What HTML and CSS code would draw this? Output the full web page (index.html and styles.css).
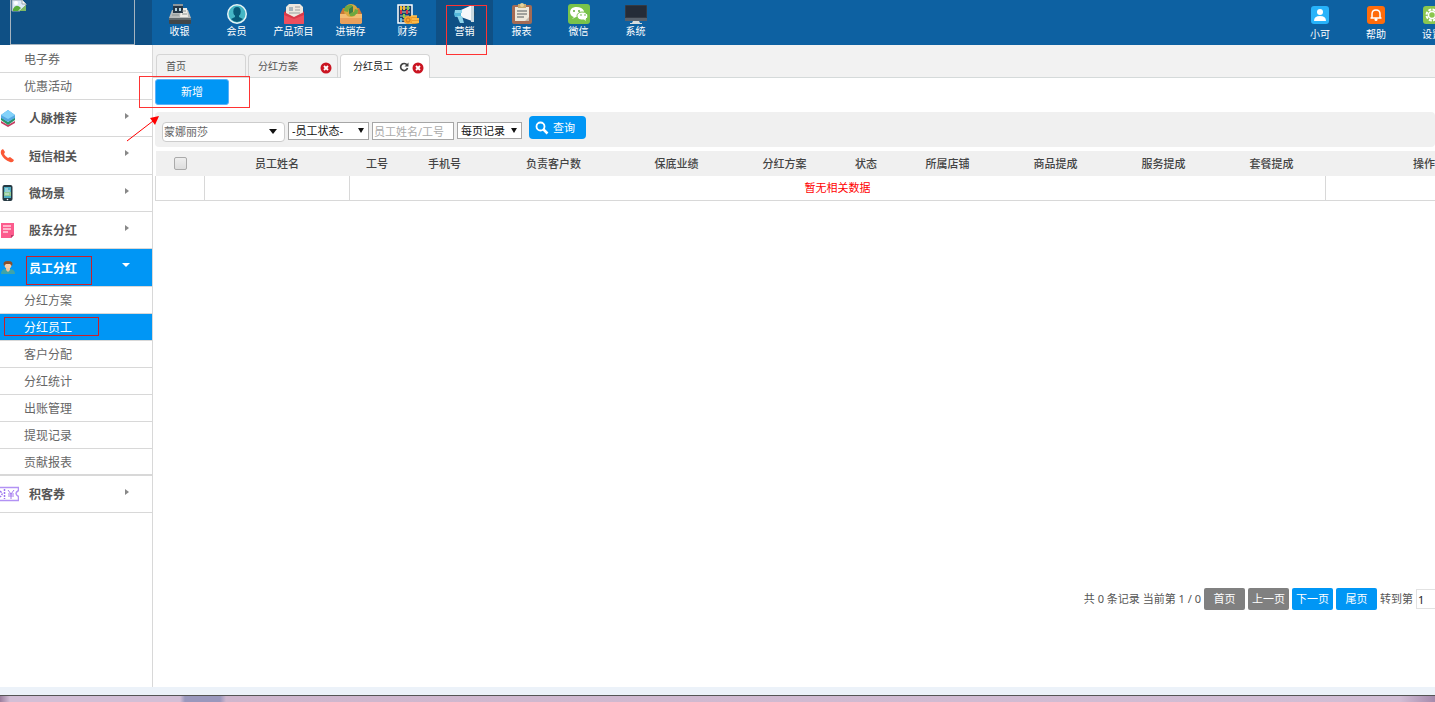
FILE: index.html
```html
<!DOCTYPE html>
<html lang="zh-CN">
<head>
<meta charset="utf-8">
<title>分红员工</title>
<link rel="stylesheet" href="styles.css">
</head>
<body>
<header class="topbar">
  <div class="brand">
    <div class="logo">
      <svg class="logo-icon" width="16" height="12" viewBox="0 0 16 12"><path d="M1 0H11L15 4V5L9 11H1Z" fill="#dce9f8" stroke="#9aa5ad"/><path d="M11 0V4H15" fill="#fff" stroke="#9aa5ad"/><path d="M2 9Q5 3 10 8L7 11H2Z" fill="#58ad3a"/><path d="M8 11L15 5V11Z" fill="#7fb965"/><circle cx="5" cy="3" r="2" fill="#fff"/></svg>
    </div>
  </div>
  <nav class="modules">
    <a class="module" href="#"><svg width="24" height="22" viewBox="0 0 24 22"><path d="M4 7h16l3 8H1z" fill="#b9bcbb"/><path d="M13 5h6l1 9h-8z" fill="#f1eee7"/><path d="M5 1h10v3H5z" fill="#8d979c"/><path d="M5 3h10v7H5z" fill="#263746"/><path d="M7 5h2v3H7zm4 0h2v3h-2z" fill="#b9d7e0"/><path d="M4 12h7M14 8h4M14 11h5" stroke="#8b9291" stroke-width="1"/><path d="M1 15h22v5q0 1-1 1H2q-1 0-1-1z" fill="#424749"/><path d="M1 15h22v2H1z" fill="#62696b"/></svg>收银</a>
    <a class="module" href="#"><svg width="24" height="22" viewBox="0 0 24 22"><circle cx="12" cy="11" r="10" fill="#e7f5f6"/><circle cx="12" cy="11" r="8.500" fill="#45b6c5"/><ellipse cx="12" cy="8.500" rx="3.700" ry="4.500" fill="#075978"/><path d="M10 12h4v2l4 2q-6 6-12 0l4-2z" fill="#075978"/></svg>会员</a>
    <a class="module" href="#"><svg width="24" height="22" viewBox="0 0 24 22"><path d="M2 10L6 4h14l2 6v9H2z" fill="#b92e40"/><path d="M7 1h11l3 3v12H4V4z" fill="#ece8df"/><path d="M7 4h4v4H7z" fill="#a7b5bb"/><path d="M13 4h5M13 7h5M7 10h11" stroke="#9c9f9f"/><path d="M2 9l10 5 10-5v11q0 1-1 1H3q-1 0-1-1z" fill="#d93a4a"/><path d="M2 12l10 4 10-4v8q0 1-1 1H3q-1 0-1-1z" fill="#ed4f5e"/></svg>产品项目</a>
    <a class="module" href="#"><svg width="24" height="22" viewBox="0 0 24 22"><path d="M1 11L4 5h16l3 6v9H1z" fill="#c97835"/><circle cx="12" cy="8" r="7" fill="#d9a73f"/><path d="M5 8q0-7 8-6l1 3-4 1-1 3zM19 7q0 7-8 6l-1-3 5-1 1-3z" fill="#6fa83f"/><path d="M10 6l4-3v6l-4 2z" fill="#3f7d46"/><path d="M1 11h6q1 3 5 3t5-3h6v9l-2 1H3l-2-1z" fill="#f3bd73"/><path d="M1 15h22v5l-2 1H3l-2-1z" fill="#eaa05c"/></svg>进销存</a>
    <a class="module" href="#"><svg width="24" height="22" viewBox="0 0 24 22"><path d="M2 2h14v18H2z" fill="#17416e" stroke="#fff" stroke-width="1.500"/><path d="M4 5h10M4 9h10M4 13h9M4 17h5" stroke="#cfc7aa"/><path d="M5 3v4M8 3v4" stroke="#f4b936" stroke-width="2"/><path d="M11 7v4M5 7v4" stroke="#d83245" stroke-width="2"/><path d="M12 3v4M8 11v4" stroke="#8bcb43" stroke-width="2"/><path d="M5 15v4" stroke="#5fb8de" stroke-width="2"/><path d="M14 13h7v2h2v5q-5 2-10 0z" fill="#e99a2c"/><path d="M15 13h6M16 16h7M16 19h7" stroke="#ffc450" stroke-width="1.500"/><circle cx="12" cy="17" r="4" fill="#f5a52e"/><circle cx="12" cy="17" r="2" fill="none" stroke="#cc7520"/></svg>财务</a>
    <a class="module selected" href="#"><svg width="24" height="22" viewBox="0 0 24 22"><path d="M20 7q5 4 0 7z" fill="#224a65"/><path d="M2 7h7v7H2l-1-3z" fill="#56b9db"/><path d="M8 7l11-5v16L8 14z" fill="#f5f8fa"/><path d="M4 13h5l2 7H7z" fill="#8bd3e9"/><path d="M18 2h3v17h-3z" fill="#c9d8df"/><path d="M2 7h7v3H2z" fill="#8bd3e9"/></svg>营销<i class="mark mark-module"></i></a>
    <a class="module" href="#"><svg width="24" height="22" viewBox="0 0 24 22"><rect x="2" y="2" width="20" height="19" rx="2" fill="#a46b54"/><path d="M5 4h14v14H5z" fill="#eee9db"/><path d="M8 1h8v4H8z" fill="#c7ab70"/><circle cx="12" cy="2" r="2" fill="#e6d29a"/><path d="M7 8h10M7 11h10M7 14h7" stroke="#888a88" stroke-width="1.500"/><path d="M15 18l4-4v4z" fill="#c4bbae"/></svg>报表</a>
    <a class="module" href="#"><svg width="24" height="22" viewBox="0 0 24 22"><rect x="1" y="1" width="22" height="20" rx="3" fill="#79c34b"/><path d="M9.500 4C1 4 2 13 7 14L5 16l4-2q9 0 8-6Q15 4 9.500 4" fill="#fff"/><path d="M15 9c-6 0-7 7-1 8h3l3 2-1-3q4-3 0-6-1-1-4-1" fill="#fff" stroke="#79c34b"/><circle cx="7" cy="8" r="1" fill="#64ad3e"/><circle cx="12" cy="8" r="1" fill="#64ad3e"/><circle cx="14" cy="12" r=".8" fill="#64ad3e"/><circle cx="18" cy="12" r=".8" fill="#64ad3e"/></svg>微信</a>
    <a class="module" href="#"><svg width="24" height="22" viewBox="0 0 24 22"><rect x="1" y="2" width="22" height="16" rx="1" fill="#343a44"/><path d="M2 3h20v11H2z" fill="#252c38"/><path d="M1 15h22v3H1z" fill="#59616b"/><path d="M9 18h6l1 2h2v1H6v-1h2z" fill="#d9dddd"/></svg>系统</a>
  </nav>
  <nav class="account">
    <a class="tool" href="#"><svg width="18" height="18" viewBox="0 0 18 18"><rect width="18" height="18" rx="3" fill="#27b3fa"/><circle cx="9" cy="6" r="3" fill="#fff"/><path d="M3 15q0-5 6-5t6 5z" fill="#fff"/></svg>小可</a>
    <a class="tool" href="#"><svg width="18" height="18" viewBox="0 0 18 18"><rect width="18" height="18" rx="3" fill="#ff6c0a"/><path d="M3.500 12h11M5 12V8q0-4 4-4t4 4v4" fill="none" stroke="#fff" stroke-width="1.500"/><circle cx="9" cy="13.500" r="1.500" fill="#fff"/></svg>帮助</a>
    <a class="tool" href="#"><svg width="18" height="18" viewBox="0 0 18 18"><rect width="18" height="18" rx="3" fill="#8bc64f"/><circle cx="9" cy="9" r="5.500" fill="none" stroke="#fff" stroke-width="2" stroke-dasharray="3 1.300"/><circle cx="9" cy="9" r="3.500" fill="none" stroke="#fff" stroke-width="1.500"/></svg>设置</a>
  </nav>
</header>
<div class="workspace">
  <aside class="sidebar">
    <a class="sub" href="#">电子券</a>
    <a class="sub" href="#">优惠活动</a>
    <a class="group" href="#"><svg width="20" height="18" viewBox="0 0 20 18"><path d="M2 12l7 4 7-4v2l-7 4-7-4z" fill="#c53d62"/><path d="M2 8l7 5 7-5v3l-7 5-7-5z" fill="#269568"/><path d="M9 1l7 5v3l-7 4-7-4V6z" fill="#55a9e3"/><path d="M9 1l7 5-7 4-7-4z" fill="#83d2fa"/></svg><span>人脉推荐</span><b class="arrow"></b></a>
    <a class="group tall" href="#"><svg width="20" height="18" viewBox="0 0 20 18"><path d="M4 2Q1 3 2 7q3 6 9 8 3 1 4-2l-4-3-2 1q-3-2-4-4l1-2z" fill="#fb5836"/></svg><span>短信相关</span><b class="arrow"></b></a>
    <a class="group" href="#"><svg width="20" height="18" viewBox="0 0 20 18"><rect x="3.500" y="1" width="10" height="16" rx="2" fill="#263a43"/><path d="M5 3h7v11H5z" fill="#50aec4"/><path d="M5 8h7v4H5z" fill="#8fc995"/><path d="M6 5h3M6 7h5M6 10h4" stroke="#d9ece7"/><circle cx="8.500" cy="15.500" r=".8" fill="#fff"/></svg><span>微场景</span><b class="arrow"></b></a>
    <a class="group" href="#"><svg width="20" height="18" viewBox="0 0 20 18"><path d="M2 2h13v12l-3 3H2z" fill="#fc5b8d"/><path d="M12 17v-3h3z" fill="#b73b65"/><path d="M4 5h8M4 8h8M4 11h5" stroke="#ffd3e0" stroke-width="1.500"/></svg><span>股东分红</span><b class="arrow"></b></a>
    <a class="group tall active" href="#"><svg width="20" height="18" viewBox="0 0 20 18"><path d="M2 15q0-5 5-5h3q6 0 6 5z" fill="#3fa4a8"/><path d="M7 8h4v3l-2 2-2-2z" fill="#efc29d"/><circle cx="9" cy="6" r="3.500" fill="#f7cfad"/><path d="M5 7q-2-5 4-5 6 0 4 5l-2-2H7z" fill="#87512e"/></svg><span>员工分红</span><b class="arrow down"></b><i class="mark mark-group"></i></a>
    <a class="sub" href="#">分红方案</a>
    <a class="sub active" href="#">分红员工<i class="mark mark-sub"></i></a>
    <a class="sub" href="#">客户分配</a>
    <a class="sub" href="#">分红统计</a>
    <a class="sub" href="#">出账管理</a>
    <a class="sub" href="#">提现记录</a>
    <a class="sub last" href="#">贡献报表</a>
    <a class="group" href="#"><svg width="20" height="18" viewBox="0 0 20 18"><path d="M0 2.500h19.500v3q-5 3 0 6v4H0" fill="none" stroke="#b292f4" stroke-width="1.500"/><path d="M1 6q4 3 0 6M5.500 4v10" fill="none" stroke="#9d74ef" stroke-width="1.500" stroke-dasharray="2 1"/><path d="M9 5l3 4 3-4M9 9h6M9 11h6M12 9v5" fill="none" stroke="#a47bef"/></svg><span>积客券</span><b class="arrow"></b></a>
  </aside>
  <main class="content">
    <nav class="tabs">
      <a class="tab" href="#">首页</a>
      <a class="tab" href="#">分红方案<svg class="tab-close" width="12" height="12" viewBox="0 0 12 12"><circle cx="6" cy="6" r="5.500" fill="#ca1522"/><path d="M4 4l4 4M8 4L4 8" stroke="#fff" stroke-width="1.800"/></svg></a>
      <a class="tab current" href="#">分红员工<svg class="tab-reload" width="10" height="10" viewBox="0 0 10 10"><path d="M8 3a3.500 3.500 0 1 0 .5 3" fill="none" stroke="#444" stroke-width="1.700"/><path d="M9.500.5v4h-4z" fill="#444"/></svg><svg class="tab-close" width="12" height="12" viewBox="0 0 12 12"><circle cx="6" cy="6" r="5.500" fill="#ca1522"/><path d="M4 4l4 4M8 4L4 8" stroke="#fff" stroke-width="1.800"/></svg></a>
    </nav>
    <div class="actions"><button class="add" type="button">新增</button><i class="mark mark-add"></i>
      <svg class="pointer" width="34" height="28" viewBox="0 0 34 28"><path d="M1 26L27 6" stroke="red"/><path d="M33 1L24 3l5 7z" fill="red"/></svg>
    </div>
    <form class="filters">
      <span class="pick shop"><select aria-label="店铺"><option>蒙娜丽莎</option></select></span>
      <span class="pick state"><select aria-label="员工状态"><option>-员工状态-</option></select></span>
      <input class="keyword" type="text" aria-label="员工姓名/工号" placeholder="员工姓名/工号">
      <span class="pick size"><select aria-label="每页记录"><option>每页记录</option></select></span>
      <button class="search" type="button"><svg width="14" height="14" viewBox="0 0 14 14"><circle cx="5.500" cy="5.500" r="4" fill="none" stroke="#fff" stroke-width="1.800"/><path d="M8.500 8.500L12.500 12.500" stroke="#fff" stroke-width="2.500"/></svg>查询</button>
    </form>
    <div class="table-view">
      <table>
        <colgroup><col class="c-check"><col class="c-name"><col class="c-short"><col class="c-phone"><col class="c-count"><col class="c-mid"><col class="c-mid"><col class="c-short"><col class="c-mid"><col class="c-mid"><col class="c-mid"><col class="c-mid"><col class="c-action"></colgroup>
        <thead><tr><th><input type="checkbox" aria-label="全选"></th><th>员工姓名</th><th>工号</th><th>手机号</th><th>负责客户数</th><th>保底业绩</th><th>分红方案</th><th>状态</th><th>所属店铺</th><th>商品提成</th><th>服务提成</th><th>套餐提成</th><th>操作</th></tr></thead>
        <tbody><tr><td></td><td></td><td class="empty" colspan="10">暂无相关数据</td><td></td></tr></tbody>
      </table>
    </div>
    <div class="pager">
      <span>共 0 条记录 当前第 1 / 0</span>
      <button type="button" disabled>首页</button>
      <button type="button" disabled>上一页</button>
      <button type="button">下一页</button>
      <button type="button">尾页</button>
      <label for="page">转到第</label><input id="page" type="text" value="1">
    </div>
  </main>
</div>
<footer class="status"></footer>
<div class="taskbar"></div>
</body>
</html>
```

FILE: styles.css
```css
* { box-sizing: border-box; }
body {
  margin: 0;
  min-height: 100vh;
  display: flex;
  flex-direction: column;
  overflow: hidden;
  background: #fff;
  color: #555;
  font: 11px/16px "Noto Sans", "Noto Sans CJK SC", sans-serif;
}
a { color: inherit; text-decoration: none; }
button, input, select { font: inherit; margin: 0; }
svg { flex: none; display: block; }

.topbar { display: flex; height: 45px; background: #0d61a2; color: #fff; }
.brand { flex: none; width: 152px; padding: 0 17px 0 10px; background: #0f5085; }
.logo { height: 45px; border: 1px solid #a5b3bf; border-top: 0; }
.modules { display: flex; margin-left: -1px; }
.module, .tool { position: relative; display: flex; flex-direction: column; align-items: center; font-size: 10px; flex: none; }
.module { width: 57px; padding-top: 3px; line-height: 13px; }
.module.selected { background: #0f5085; }
.account { display: flex; margin-left: auto; margin-right: -25px; }
.tool { width: 56px; padding-top: 6px; gap: 3px; line-height: 14px; }

.mark { position: absolute; border: 1px solid #f33; z-index: 2; pointer-events: none; }
.mark-module { left: 10px; top: 5px; width: 41px; height: 50px; }
.mark-group { left: 26px; top: 7px; width: 66px; height: 29px; border-color: #c8202c; }
.mark-sub { left: 4px; top: 3px; width: 95px; height: 19px; border-color: #c8202c; }
.mark-add { left: -16px; top: -2px; width: 111px; height: 32px; }
.pointer { position: absolute; left: -29px; top: 37px; z-index: 2; }

.workspace { flex: 1; display: flex; }
.sidebar { flex: none; width: 153px; padding-top: 1px; border-right: 1px solid #d8d8d8; }
.sub { position: relative; display: flex; align-items: center; height: 27px; padding: 2px 0 0 24px; border-bottom: 1px solid #d8d8d8; font-size: 12px; color: #666; }
.sub.last { border-bottom-width: 2px; }
.group { position: relative; display: flex; align-items: center; height: 37px; border-bottom: 1px solid #d8d8d8; font-size: 12px; font-weight: bold; color: #555; }
.group.tall { height: 38px; }
.group svg { margin-left: -1px; }
.group span { width: 106px; padding: 2px 0 0 10px; }
.group.active, .sub.active { background: #0096f5; color: #fff; }
.arrow { border: 3px solid transparent; border-left: 4px solid #888; border-right: 0; margin-bottom: 5px; }
.arrow.down { border: 4px solid transparent; border-top-color: #fff; border-bottom: 0; margin-left: -3px; }

.content { flex: 1; min-width: 0; display: flex; flex-direction: column; }
.tabs { display: flex; gap: 2px; height: 33px; padding: 9px 3px 0; background: #f2f2f2; border-bottom: 1px solid #d5dada; }
.tab { display: flex; align-items: center; width: 90px; height: 24px; padding: 0 5px 2px 9px; border: 1px solid #d5d5d5; border-bottom: 0; border-radius: 4px 4px 0 0; font-size: 10px; }
.tab.current { background: #fff; color: #222; padding-left: 12px; }
.tab-close { margin: 4px 0 0 auto; }
.tab-reload { margin: 3px 0 0 6px; }

.actions { position: relative; height: 34px; margin-left: 2px; padding-top: 1px; }
.add { display: block; width: 74px; height: 26px; padding: 0; border: 1px solid #5bb1fb; border-radius: 3px; background: #0096f5; color: #fff; }

.filters { display: flex; gap: 3px; align-items: flex-start; height: 35px; margin-left: 2px; padding: 10px 7px 0; border-radius: 4px; background: #f0f0f0; }
.pick { position: relative; display: flex; }
.pick select { width: 100%; height: 100%; appearance: none; border: 1px solid #a6a6a6; background: #fff; color: #111; padding: 0 3px; border-radius: 0; }
.pick::after { content: ""; position: absolute; right: 5px; top: 6px; border: 3px solid transparent; border-top: 5px solid #111; border-bottom: 0; pointer-events: none; }
.shop { width: 123px; height: 20px; }
.shop select { border-color: #ccc; border-radius: 4px; color: #666; padding: 0 1px; }
.shop::after { border-width: 5px 4px 0; right: 8px; top: 7px; }
.state { width: 81px; height: 18px; }
.keyword { width: 82px; height: 18px; padding: 0 1px; border: 1px solid #a6a6a6; background: #fff; }
.keyword::placeholder { color: #aaa; }
.size { width: 65px; height: 17px; }
.search { display: flex; align-items: center; gap: 4px; height: 23px; width: 57px; margin: -6px 0 0 4px; padding: 0 6px; border: 0; border-radius: 4px; background: #0096f5; color: #fff; }

.table-view { overflow: hidden; margin: 4px 0 0 2px; }
table { table-layout: fixed; width: 1367px; border-collapse: collapse; }
th { height: 25px; padding: 0; background: #f0f0f0; font-weight: 500; color: #444; }
td { height: 24px; padding: 0; border: 1px solid #d8d8d8; border-top: 0; text-align: center; }
th input { display: block; width: 13px; height: 13px; margin: 0 auto; appearance: none; border: 1px solid #aaa; border-radius: 2px; background: linear-gradient(#eee, #ddd); }
.empty { color: red; }
.c-check { width: 49px; }
.c-name { width: 145px; }
.c-short { width: 55px; }
.c-phone { width: 80px; }
.c-count { width: 138px; }
.c-mid { width: 108px; }
.c-action { width: 197px; }

.pager { display: flex; align-items: center; justify-content: flex-end; gap: 3px; margin-top: auto; padding-bottom: 77px; margin-right: -21px; white-space: nowrap; }
.pager button { width: 41px; height: 22px; padding: 0; border: 0; border-radius: 2px; background: #0096f5; color: #fff; }
.pager button:disabled { background: #808080; }
.pager input { width: 40px; height: 20px; padding: 0 1px; border: 1px solid #e2e2e2; color: #222; }

.status { height: 8px; background: #ecf2f9; }
.taskbar { height: 7px; border-top: 1px solid #555; background: linear-gradient(90deg, #9b7e9d 0, #d3bfd6 10px, #d3bfd6 180px, #9a98bd 185px, #9a98bd 220px, #cfb6cd 226px, #d2bed5 1400px, #a58aac 100%); }
```
